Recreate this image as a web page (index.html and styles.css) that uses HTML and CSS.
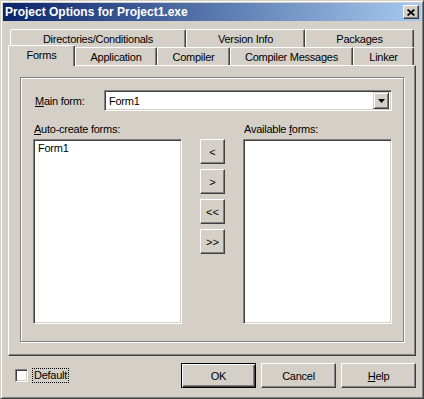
FILE: index.html
```html
<!DOCTYPE html>
<html>
<head>
<meta charset="utf-8">
<title>Project Options for Project1.exe</title>
<link rel="stylesheet" href="styles.css">
</head>
<body>
<div class="window">
  <div class="titlebar">
    <span class="title">Project Options for Project1.exe</span>
    <span class="close"><svg width="8" height="7" viewBox="0 0 8 7"><path d="M0.6 0.5L7.4 6.5M7.4 0.5L0.6 6.5" stroke="#000" stroke-width="1.7" fill="none"/></svg></span>
  </div>
  <div class="tabctl">
    <div class="tabrow back">
      <div class="tab t-dir">Directories/Conditionals</div>
      <div class="tab t-ver">Version Info</div>
      <div class="tab t-pkg">Packages</div>
    </div>
    <div class="tabrow front">
      <div class="tab sel t-forms">Forms</div>
      <div class="tab t-app">Application</div>
      <div class="tab t-comp">Compiler</div>
      <div class="tab t-msg">Compiler Messages</div>
      <div class="tab t-link">Linker</div>
    </div>
    <div class="panel">
      <div class="group">
        <div class="mainrow">
          <span class="main-lbl"><u>M</u>ain form:</span>
          <div class="combo">
            <span class="combo-text">Form1</span>
            <span class="drop"><svg width="7" height="4" viewBox="0 0 7 4"><polygon points="0,0 7,0 3.5,4" fill="#000"/></svg></span>
          </div>
        </div>
        <div class="lists">
          <div class="col">
            <div class="lbl"><u>A</u>uto-create forms:</div>
            <div class="listbox"><div class="item">Form1</div></div>
          </div>
          <div class="movers">
            <div class="btn mover">&lt;</div>
            <div class="btn mover">&gt;</div>
            <div class="btn mover">&lt;&lt;</div>
            <div class="btn mover">&gt;&gt;</div>
          </div>
          <div class="col">
            <div class="lbl">Available <u>f</u>orms:</div>
            <div class="listbox"></div>
          </div>
        </div>
      </div>
    </div>
  </div>
  <div class="bottom">
    <span class="chk"></span>
    <span class="focus">Default</span>
    <div class="actions">
      <div class="btn push default">OK</div>
      <div class="btn push">Cancel</div>
      <div class="btn push"><span><u>H</u>elp</span></div>
    </div>
  </div>
</div>
</body>
</html>
```

FILE: styles.css
```css
body {
  margin: 0;
  background: #D4D0C8;
  font-family: "Liberation Sans", Arial, sans-serif;
  font-size: 11px;
  letter-spacing: -0.25px;
  color: #000;
}

.window {
  box-sizing: border-box;
  width: 424px;
  height: 399px;
  border: 1px solid;
  border-color: #D4D0C8 #404040 #404040 #D4D0C8;
  box-shadow: inset 1px 1px #fff, inset -1px -1px #808080;
  padding: 2px;
  background: #D4D0C8;
}

.titlebar {
  height: 18px;
  display: flex;
  align-items: center;
  justify-content: space-between;
  background: linear-gradient(to right, #0A246A, #A6CAF0);
}

.title {
  color: #fff;
  font-weight: bold;
  font-size: 12px;
  letter-spacing: 0;
  line-height: 18px;
  padding-left: 2px;
}

.close {
  box-sizing: border-box;
  width: 16px;
  height: 14px;
  margin-right: 2px;
  border: 1px solid;
  border-color: #fff #404040 #404040 #fff;
  box-shadow: inset -1px -1px #808080;
  background: #D4D0C8;
  display: flex;
  align-items: center;
  justify-content: center;
  padding-right: 1px;
}

.close svg { display: block; }

.tabctl {
  margin: 8px 0 0 5px;
  width: 408px;
}

.tabrow {
  display: flex;
  align-items: flex-start;
  height: 18px;
}

.tabrow.back { padding-left: 2px; }

.tab {
  box-sizing: border-box;
  height: 18px;
  border-top: 1px solid #fff;
  border-left: 1px solid #fff;
  border-right: 1px solid #404040;
  border-radius: 2px 2px 0 0;
  box-shadow: inset -1px 0 #808080;
  background: #D4D0C8;
  display: flex;
  align-items: center;
  justify-content: center;
  white-space: nowrap;
}

.tab.sel {
  height: 21px;
  margin-top: -2px;
  padding-bottom: 2px;
  position: relative;
  z-index: 1;
}

.t-dir { width: 176px; }
.t-ver { width: 119px; }
.t-pkg { width: 109px; }
.t-forms { width: 67px; }
.t-app { width: 82px; }
.t-comp { width: 73px; }
.t-msg { width: 123px; }
.t-link { width: 61px; }

.panel {
  box-sizing: border-box;
  width: 408px;
  height: 291px;
  border: 1px solid;
  border-color: #fff #404040 #404040 #fff;
  box-shadow: inset -1px -1px #808080;
  padding: 11px;
}

.group {
  box-sizing: border-box;
  width: 384px;
  height: 265px;
  border: 1px solid #808080;
  box-shadow: inset 1px 1px #fff, 1px 1px #fff;
  padding: 12px 0 0 12px;
}

.mainrow {
  display: flex;
  align-items: center;
  height: 21px;
}

.main-lbl {
  width: 69px;
  margin-left: 2px;
}

.combo {
  box-sizing: border-box;
  width: 288px;
  height: 21px;
  border: 1px solid;
  border-color: #808080 #fff #fff #808080;
  box-shadow: inset 1px 1px #404040, inset -1px -1px #D4D0C8;
  background: #fff;
  display: flex;
  align-items: center;
  padding: 2px;
}

.combo-text { padding-left: 2px; }

.drop {
  box-sizing: border-box;
  margin-left: auto;
  width: 16px;
  height: 17px;
  border: 1px solid;
  border-color: #D4D0C8 #404040 #404040 #D4D0C8;
  box-shadow: inset 1px 1px #fff, inset -1px -1px #808080;
  background: #D4D0C8;
  display: flex;
  align-items: center;
  justify-content: center;
}

.drop svg { display: block; }

.lists {
  display: flex;
  margin-top: 12px;
}

.col {
  width: 149px;
  display: flex;
  flex-direction: column;
}

.lbl {
  height: 13px;
  line-height: 13px;
  margin-bottom: 3px;
  padding-left: 1px;
  white-space: nowrap;
}

.listbox {
  box-sizing: border-box;
  height: 185px;
  border: 1px solid;
  border-color: #808080 #fff #fff #808080;
  box-shadow: inset 1px 1px #404040, inset -1px -1px #D4D0C8;
  background: #fff;
  padding: 2px;
}

.item {
  line-height: 13px;
  padding-left: 2px;
}

.movers {
  width: 25px;
  margin: 0 18px;
  padding-top: 16px;
  display: flex;
  flex-direction: column;
  gap: 5px;
}

.btn {
  box-sizing: border-box;
  border: 1px solid;
  border-color: #fff #404040 #404040 #fff;
  box-shadow: inset -1px -1px #808080;
  background: #D4D0C8;
  display: flex;
  align-items: center;
  justify-content: center;
}

.mover {
  width: 25px;
  height: 25px;
  letter-spacing: 0;
}

.bottom {
  display: flex;
  align-items: center;
  height: 25px;
  margin-top: 7px;
  padding-left: 12px;
  padding-right: 5px;
}

.chk {
  box-sizing: border-box;
  width: 13px;
  height: 13px;
  border: 1px solid;
  border-color: #808080 #fff #fff #808080;
  box-shadow: inset 1px 1px #404040, inset -1px -1px #D4D0C8;
  background: #fff;
  margin-right: 4px;
}

.focus {
  border: 1px dotted #000;
  padding: 0 1px;
  line-height: 13px;
}

.actions {
  margin-left: auto;
  display: flex;
  gap: 5px;
}

.push {
  width: 75px;
  height: 25px;
}

.push.default {
  border-color: #000;
  box-shadow: inset 1px 1px #fff, inset -1px -1px #404040, inset -2px -2px #808080;
}
```
